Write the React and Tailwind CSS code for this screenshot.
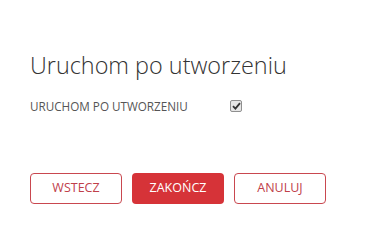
export default function App() {
  return (
    <div className="w-[375px] h-[232px] bg-white pt-[49px] pl-[30px]" style={{ fontFamily: '"Open Sans", sans-serif' }}>
      <h1 className="text-[23.4px] leading-[32px] font-light text-[#333]">Uruchom po utworzeniu</h1>
      <div className="mt-[17px] flex items-center h-[16px]">
        <span className="w-[200px] text-[11.7px] leading-[16px] text-[#555] uppercase">Uruchom po utworzeniu</span>
        <span className="w-[12px] h-[12px] rounded-[2px] border border-[#8f8f8f] bg-[#e6e6e6] flex items-center justify-center">
          <svg width="9" height="8" viewBox="0 0 9 8">
            <path d="M1 4.2 L3.4 6.6 L8 1.2" fill="none" stroke="#333" strokeWidth="1.8" />
          </svg>
        </span>
      </div>
      <div className="mt-[59px] flex gap-[10px]">
        <button className="w-[92px] h-[31px] rounded-[4px] border border-[#c9474f] text-[#c0404a] text-[12.5px] uppercase bg-white">Wstecz</button>
        <button className="w-[92px] h-[31px] rounded-[4px] bg-[#d63338] text-white text-[12.5px] uppercase">Zakończ</button>
        <button className="w-[92px] h-[31px] rounded-[4px] border border-[#c9474f] text-[#c0404a] text-[12.5px] uppercase bg-white">Anuluj</button>
      </div>
    </div>
  );
}
